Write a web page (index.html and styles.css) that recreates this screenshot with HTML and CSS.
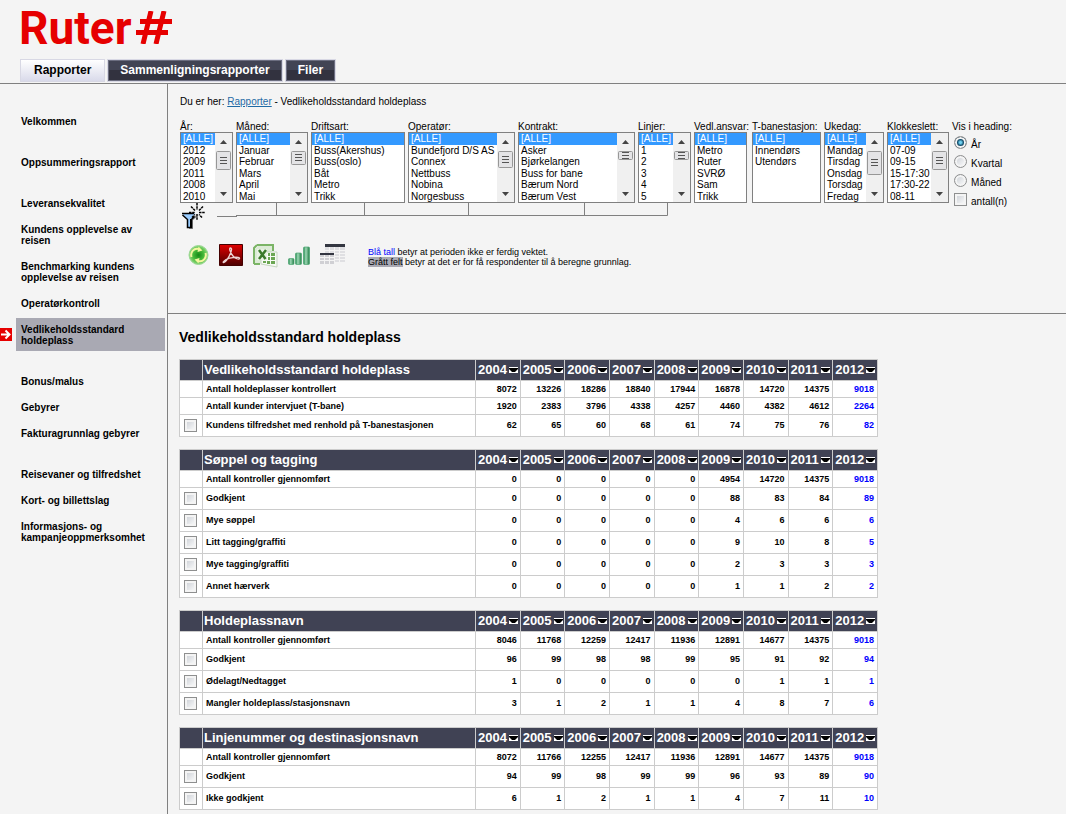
FILE: index.html
```
<!DOCTYPE html>
<html lang="no">
<head>
<meta charset="utf-8">
<title>Ruter – Vedlikeholdsstandard holdeplass</title>
<link rel="stylesheet" href="styles.css">
</head>
<body>
<header class="top">
  <a class="logo" href="#" aria-label="Ruter#"><span>Ruter</span><svg width="38" height="33" viewBox="0 0 38 33" aria-hidden="true"><path d="M16 0 8 33M29 0 21 33M5 10.500H37M1 21.500H33" fill="none" stroke="#e60000" stroke-width="5"/></svg></a>
  <nav class="tabs">
    <a class="tab tab-active" href="#">Rapporter</a>
    <a class="tab" href="#">Sammenligningsrapporter</a>
    <a class="tab" href="#">Filer</a>
  </nav>
</header>
<div class="page">
  <nav class="side">
    <a class="last" href="#">Velkommen</a>
    <a class="last" href="#">Oppsummeringsrapport</a>
    <a href="#">Leveransekvalitet</a>
    <a href="#">Kundens opplevelse av reisen</a>
    <a href="#">Benchmarking kundens opplevelse av reisen</a>
    <a href="#">Operatørkontroll</a>
    <a class="last current" href="#"><svg class="arrow" width="12" height="13" viewBox="0 0 12 13" aria-hidden="true"><path d="M0 0H12V13H0z" fill="#e60000"/><path d="M1 6.500H9M5.500 2.500 9.500 6.500 5.500 10.500" fill="none" stroke="#fff" stroke-width="2"/></svg>Vedlikeholdsstandard holdeplass</a>
    <a href="#">Bonus/malus</a>
    <a href="#">Gebyrer</a>
    <a class="last" href="#">Fakturagrunnlag gebyrer</a>
    <a href="#">Reisevaner og tilfredshet</a>
    <a href="#">Kort- og billettslag</a>
    <a href="#">Informasjons- og kampanjeoppmerksomhet</a>
  </nav>
  <main class="main">
    <section class="controls">
      <p class="crumbs">Du er her: <a href="#">Rapporter</a> - Vedlikeholdsstandard holdeplass</p>
      <form class="filters" id="filters"></form>
      <div class="links">
        <button class="icon" type="button" aria-label="Filtrer"><svg width="25" height="27" viewBox="0 0 25 27"><path d="M10 13H18L13 17V26H9z" fill="#888"/><path d="M2 10H15L11 16V24H7V16z" fill="#9cf"/><path d="M2 10.500H14M2.500 12 7.500 16.500V24.500H11.500V16.500L14.500 13.500" fill="none" stroke="#000" stroke-width="1.500"/><path d="M11 16V25" stroke="#000" stroke-width="2"/><path d="M17 0V7M17 11V17M9 9.500H15M19 9.500H25M11 3.500 15 7.500M23 3.500 19 7.500M12 14.500 15 11.500M22 14.500 19 11.500" stroke="#000" stroke-width="1.500" stroke-dasharray="2.500 .7"/></svg></button>
        <svg width="452" height="14" viewBox="0 0 452 14" aria-hidden="true"><path d="M0 13.500H20M19 12.500H450.500V0M59.500 0V12M147.500 0V12M251.500 0V12M367.500 0V12" fill="none" stroke="#808080"/></svg>
      </div>
      <div class="tools">
        <button class="icon" type="button" aria-label="Oppdater"><svg width="21" height="22" viewBox="0 0 21 22"><defs><radialGradient id="gr"><stop offset="0" stop-color="#168a16"/><stop offset=".6" stop-color="#4bbd3c"/><stop offset="1" stop-color="#8fd67f"/></radialGradient></defs><circle cx="10.500" cy="11" r="9.500" fill="url(#gr)" stroke="#9bd893"/><path d="M3.500 13C2 8 6 3.500 11 5M17.500 9C19 14 15 18.500 10 17" fill="none" stroke="#f4f6a0" stroke-width="2"/><path d="M10.500 2.500 14.500 6.500 9.500 8zM10.500 19.500 6.500 15.500 11.500 14z" fill="#f4f6a0"/></svg></button>
        <button class="icon" type="button" aria-label="PDF"><svg width="24" height="22" viewBox="0 0 24 22"><defs><linearGradient id="pd" x2="0" y2="1"><stop stop-color="#e00000"/><stop offset="1" stop-color="#4a0000"/></linearGradient></defs><path d="M.5.500H23.500V21.500H.5z" fill="url(#pd)" stroke="#400"/><path d="M11.500 4C9.500 4 11.500 9 14 12 16 14.500 20 16 20.500 14.500 21 12.500 11 13 7 15.500 4 17.500 3.500 19 5 18.500 8 17 13 8 12.500 5Q12.300 4 11.500 4" fill="none" stroke="#eed4d4" stroke-width="1.300"/></svg></button>
        <button class="icon" type="button" aria-label="Excel"><svg width="25" height="24" viewBox="0 0 25 24"><path d="M4 1H20V7M1 20V4L4 1M1 20H7" fill="none" stroke="#7bb466" stroke-width="2"/><path d="M2 5 5 2H19V19H2z" fill="#dcebd6"/><path d="M8 8H24V23L8 20z" fill="#f7faf5" stroke="#c5d5bf"/><path d="M15 9H17V12H15zM18 9H22V12H18zM15 13H17V16H15zM18 13H22V16H18zM10 17H13V19H10zM14 17H17V20H14zM18 17H22V20H18z" fill="#6ba653"/><path d="M4 5H14V16H4z" fill="#e8f3e3"/><path d="M6 6 12.500 15M13 6 6 15" stroke="#3b7a2b" stroke-width="2.500"/></svg></button>
        <button class="icon" type="button" aria-label="Graf"><svg width="22" height="22" viewBox="0 0 22 22"><defs><linearGradient id="br"><stop stop-color="#1d8549"/><stop offset=".4" stop-color="#9fd8b6"/><stop offset="1" stop-color="#1d7a42"/></linearGradient></defs><g fill="url(#br)" stroke="#4da673" stroke-width=".7"><rect x=".5" y="14.500" width="5.500" height="6" rx="1"/><rect x="7.500" y="9" width="6" height="11.500" rx="1"/><rect x="15.500" y="3" width="6" height="17.500" rx="1"/></g></svg></button>
        <button class="icon" type="button" aria-label="Tabell"><svg width="25" height="20" viewBox="0 0 25 20"><path d="M5 2H25V18H5z" fill="#dfdfe2"/><path d="M5 0H25V3H5z" fill="#333641"/><path d="M5 6.500H25M14 9.500H25M14 12.500H25M14 15.500H25M9.500 3V9M14.500 3V18M19.500 3V18" stroke="#f4f4f4"/><path d="M0 10H14V20H0z" fill="#d0d0d4"/><path d="M0 9H14V11H0z" fill="#333641"/><path d="M0 13.500H14M0 16.500H14M4.500 11V20M9.500 11V20" stroke="#f4f4f4"/></svg></button>
        <p class="legend"><span class="blue">Blå tall</span> betyr at perioden ikke er ferdig vektet.<br><span class="gray">Grått felt</span> betyr at det er for få respondenter til å beregne grunnlag.</p>
      </div>
    </section>
    <section class="report">
      <h1>Vedlikeholdsstandard holdeplass</h1>
      <div id="tables"></div>
    </section>
  </main>
</div>
<script src="app.js"></script>
</body>
</html>
```
FILE: app.js
```
// name, size class, thumb top, thumb height (0 = no scroll bar), options
const filters = [
  ["År", "w-s", 18, 18, ["2012", "2009", "2011", "2008", "2010"]],
  ["Måned", "w-l", 18, 13, ["Januar", "Februar", "Mars", "April", "Mai"]],
  ["Driftsart", "w-xl", 0, 0, ["Buss(Akershus)", "Buss(oslo)", "Båt", "Metro", "Trikk"]],
  ["Operatør", "w-2xl", 18, 16, ["Bundefjord D/S AS", "Connex", "Nettbuss", "Nobina", "Norgesbuss"]],
  ["Kontrakt", "w-3xl", 18, 8, ["Asker", "Bjørkelangen", "Buss for bane", "Bærum Nord", "Bærum Vest"]],
  ["Linjer", "w-s", 18, 8, ["1", "2", "3", "4", "5"]],
  ["Vedl.ansvar", "w-s", 0, 0, ["Metro", "Ruter", "SVRØ", "Sam", "Trikk"]],
  ["T-banestasjon", "w-ml", 0, 0, ["Innendørs", "Utendørs"]],
  ["Ukedag", "w-m", 18, 23, ["Mandag", "Tirsdag", "Onsdag", "Torsdag", "Fredag"]],
  ["Klokkeslett", "w-ms", 18, 18, ["07-09", "09-15", "15-17:30", "17:30-22", "08-11"]]
];
function bar(top, h) {
  const m = top + Math.floor(h / 2);
  return `<svg class="bar" width="17" height="69" viewBox="0 0 17 69" aria-hidden="true">
    <path d="M0 0H17V69H0z" fill="#f0f0f0"/>
    <path d="M5 11H12L8.500 7zM5 59H12L8.500 63z" fill="#444"/>
    <rect x="1.500" y="${top + 0.5}" width="14" height="${h}" rx="1" fill="#e4e4e6" stroke="#979797"/>
    <path d="M5 ${m - 2.5}H12M5 ${m + 0.5}H12M5 ${m + 3.5}H12" stroke="#555"/></svg>`;
}
document.getElementById("filters").innerHTML = filters.map(([n, w, t, h, o], i) =>
  `<div class="filter"><label for="f${i}">${n}:</label><div class="box ${w}">
  <select id="f${i}" multiple size="6"><option selected>[ALLE]</option>${o.map(x => `<option>${x}</option>`).join("")}</select>${h ? bar(t, h) : ""}</div></div>`
).join("") + `<fieldset class="heading"><legend>Vis i heading:</legend>
  <label><input type="radio" name="h" checked><span>År</span></label>
  <label><input type="radio" name="h"><span>Kvartal</span></label>
  <label><input type="radio" name="h"><span>Måned</span></label>
  <label><input type="checkbox"><span>antall(n)</span></label></fieldset>`;

const years = [2004, 2005, 2006, 2007, 2008, 2009, 2010, 2011, 2012];
// A leading "*" marks a row that can be ticked.
const tables = [
  ["Vedlikeholdsstandard holdeplass", [
    ["Antall holdeplasser kontrollert", "8072 13226 18286 18840 17944 16878 14720 14375 9018"],
    ["Antall kunder intervjuet (T-bane)", "1920 2383 3796 4338 4257 4460 4382 4612 2264"],
    ["*Kundens tilfredshet med renhold på T-banestasjonen", "62 65 60 68 61 74 75 76 82"]]],
  ["Søppel og tagging", [
    ["Antall kontroller gjennomført", "0 0 0 0 0 4954 14720 14375 9018"],
    ["*Godkjent", "0 0 0 0 0 88 83 84 89"],
    ["*Mye søppel", "0 0 0 0 0 4 6 6 6"],
    ["*Litt tagging/graffiti", "0 0 0 0 0 9 10 8 5"],
    ["*Mye tagging/graffiti", "0 0 0 0 0 2 3 3 3"],
    ["*Annet hærverk", "0 0 0 0 0 1 1 2 2"]]],
  ["Holdeplassnavn", [
    ["Antall kontroller gjennomført", "8046 11768 12259 12417 11936 12891 14677 14375 9018"],
    ["*Godkjent", "96 99 98 98 99 95 91 92 94"],
    ["*Ødelagt/Nedtagget", "1 0 0 0 0 0 1 1 1"],
    ["*Mangler holdeplass/stasjonsnavn", "3 1 2 1 1 4 8 7 6"]]],
  ["Linjenummer og destinasjonsnavn", [
    ["Antall kontroller gjennomført", "8072 11766 12255 12417 11936 12891 14677 14375 9018"],
    ["*Godkjent", "94 99 98 99 99 96 93 89 90"],
    ["*Ikke godkjent", "6 1 2 1 1 4 7 11 10"]]]
];
const sort = `<svg width="9" height="6" viewBox="0 0 9 6" aria-hidden="true"><path d="M0 0H9V6H0z" fill="#fff"/><path d="M0 1H9V2L6 5H3L0 2z" fill="#000"/></svg>`;
document.getElementById("tables").innerHTML = tables.map(([title, rows], t) =>
  `<table><colgroup><col class="c-check"><col class="c-name"><col span="9"></colgroup>
  <thead><tr><th></th><th class="title">${title}</th>${years.map(y => `<th><button type="button">${y}${sort}</button></th>`).join("")}</tr></thead>
  <tbody>${rows.map(([n, v], r) => {
    const tick = n[0] === "*", id = `t${t}r${r}`;
    return `<tr class="${tick ? "tall" : ""}"><td class="check">${tick ? `<input type="checkbox" id="${id}">` : ""}</td>
    <td>${tick ? `<label for="${id}">${n.slice(1)}</label>` : n}</td>${v.split(" ").map(x => `<td class="num">${x}</td>`).join("")}</tr>`;
  }).join("")}</tbody></table>`).join("");
```
FILE: styles.css
```
* { box-sizing: border-box; }
body {
  margin: 0;
  min-height: 100vh;
  display: flex;
  flex-direction: column;
  background: #f4f4f4;
  color: #000;
  font: 10px/12px "Liberation Sans", Arial, sans-serif;
  overflow-x: hidden;
}
p, h1 { margin: 0; }
button, input, select { font: inherit; color: inherit; margin: 0; }

.top {
  padding: 11px 19px 0;
  border-bottom: 1px solid #808080;
}
.logo {
  display: flex;
  width: max-content;
  gap: 4px;
  height: 48px;
  color: #e60000;
  text-decoration: none;
  font: bold 46px/34px Roboto, sans-serif;
}
.tabs { display: flex; gap: 2px; height: 24px; padding-left: 1px; align-items: flex-start; }
.tab {
  padding: 2px 12px;
  border: 1px solid #d8d8e4;
  background: linear-gradient(#424454 50%, #32323f 50%);
  box-shadow: inset 0 0 0 1px #6c6e80;
  color: #fff;
  font: bold 12px/17px "Liberation Sans", Arial, sans-serif;
  text-decoration: none;
}
.tab-active {
  padding: 2px 13px;
  background: linear-gradient(#fff, #d9daea);
  box-shadow: none;
  color: #000;
}

.page { display: flex; flex: 1; }
.side {
  display: flex;
  flex-direction: column;
  gap: 4px;
  flex: 0 0 168px;
  padding: 26px 2px 0 16px;
  border-right: 1px solid #808080;
}
.side a {
  position: relative;
  padding: 6px 5px 5px;
  color: #000;
  font-weight: bold;
  line-height: 11px;
  text-decoration: none;
}
.side .last { margin-bottom: 15px; }
.side .current { background: #a9a9b3; }
.arrow { position: absolute; left: -16px; top: 10px; }

.main { flex: 1; min-width: 0; }
.controls {
  padding: 12px 12px 45px;
  border-bottom: 1px solid #808080;
}
.crumbs a { color: #1f6aa5; }
.filters { display: flex; gap: 3px; margin-top: 12px; }
.filter label, .heading legend { display: block; height: 12px; padding: 0; line-height: 13px; white-space: nowrap; }
.box {
  display: flex;
  height: 71px;
  border: 1px solid #808080;
  background: #fff;
  overflow: hidden;
}
.w-s { width: 53px; }
.w-m { width: 60px; }
.w-ms { width: 62px; }
.w-ml { width: 69px; }
.w-l { width: 72px; }
.w-xl { width: 94px; }
.w-2xl { width: 107px; }
.w-3xl { width: 117px; }
.bar { flex: none; }
select {
  flex: 1;
  min-width: 0;
  height: 72px;
  padding: 0;
  border: 0;
  border-radius: 0;
  outline: 0;
  background: #fff;
  scrollbar-width: none;
}
option {
  min-height: 0;
  height: 12px;
  padding: 0 2px;
  border-radius: 0;
  line-height: 12px;
}
option:nth-child(even) { height: 11px; line-height: 11px; }
option:checked {
  background: linear-gradient(#39f, #39f);
  -webkit-text-fill-color: #fff;
}
.heading { height: 83px; margin: 0; padding: 0; border: 0; }
.heading label { display: flex; gap: 4px; height: 19px; padding: 4px 2px 0; }
.heading span { padding-top: 3px; }

input[type="radio"], input[type="checkbox"] {
  appearance: none;
  display: block;
  width: 13px;
  height: 13px;
  border: 1px solid #8e8f8f;
  background: linear-gradient(135deg, #c8ccd2, #fff);
  box-shadow: inset 0 0 0 2px #f4f4f4;
}
input[type="radio"] { border-radius: 50%; }
input[type="radio"]:checked { background: radial-gradient(circle, #6fd0f0 1px, #12506f 3px, #0b3048 4px); }

.links { display: flex; gap: 12px; height: 41px; align-items: flex-start; }
.icon { display: flex; padding: 0; border: 0; background: none; }
.tools { display: flex; gap: 10px; padding-left: 8px; align-items: flex-start; }
.legend { padding: 3px 0 0 13px; font-size: 9px; line-height: 10px; }
.blue { color: #00f; }
.gray { background: #a9a9b3; }

.report { padding: 14px 11px 5px; }
h1 { font-size: 14px; line-height: 18px; }
table {
  width: 699px;
  margin: 13px 0 0;
  border-collapse: collapse;
  table-layout: fixed;
  background: #fff;
  font-size: 9px;
  font-weight: bold;
  line-height: 11px;
}
table + table { margin-top: 12px; }
.c-check { width: 23px; }
.c-name { width: 273px; }
th, td { border: 1px solid #ccc; padding: 0 3px; text-align: left; }
tr { height: 17px; }
.tall { height: 22px; }
thead tr { height: 21px; }
th { padding: 0 1px; background: #404254; color: #fff; font-size: 13px; line-height: 16px; }
th button {
  display: flex;
  align-items: center;
  gap: 2px;
  padding: 0 1px;
  border: 0;
  background: none;
}
.num { text-align: right; }
.num:last-child { color: #00f; }
.check { padding: 0 4px; }
```
